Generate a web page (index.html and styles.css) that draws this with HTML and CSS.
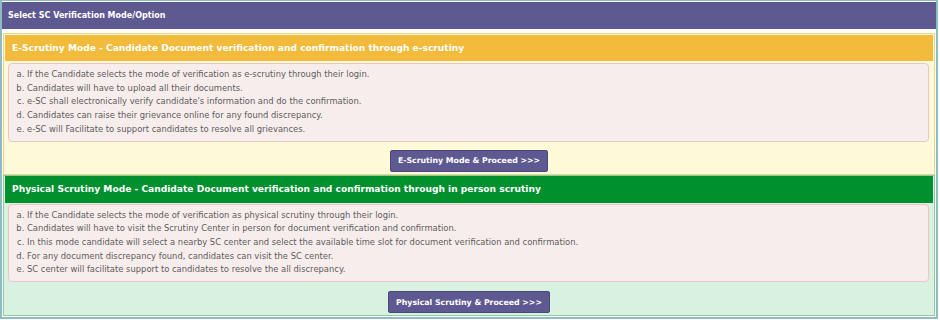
FILE: index.html
```html
<!DOCTYPE html>
<html lang="en">
<head>
  <meta charset="UTF-8">
  <title>Select SC Verification Mode</title>
  <link rel="stylesheet" href="styles.css">
</head>
<body>
  <div class="panel">
    <div class="panel-head">Select SC Verification Mode/Option</div>
    <div class="panel-body">

      <div class="mode mode-e">
        <div class="mode-head">E-Scrutiny Mode - Candidate Document verification and confirmation through e-scrutiny</div>
        <ol class="steps">
          <li>If the Candidate selects the mode of verification as e-scrutiny through their login.</li>
          <li>Candidates will have to upload all their documents.</li>
          <li>e-SC shall electronically verify candidate's information and do the confirmation.</li>
          <li>Candidates can raise their grievance online for any found discrepancy.</li>
          <li>e-SC will Facilitate to support candidates to resolve all grievances.</li>
        </ol>
        <div class="actions">
          <button class="btn">E-Scrutiny Mode &amp; Proceed &gt;&gt;&gt;</button>
        </div>
      </div>

      <div class="mode mode-p">
        <div class="mode-head">Physical Scrutiny Mode - Candidate Document verification and confirmation through in person scrutiny</div>
        <ol class="steps">
          <li>If the Candidate selects the mode of verification as physical scrutiny through their login.</li>
          <li>Candidates will have to visit the Scrutiny Center in person for document verification and confirmation.</li>
          <li>In this mode candidate will select a nearby SC center and select the available time slot for document verification and confirmation.</li>
          <li>For any document discrepancy found, candidates can visit the SC center.</li>
          <li>SC center will facilitate support to candidates to resolve the all discrepancy.</li>
        </ol>
        <div class="actions">
          <button class="btn">Physical Scrutiny &amp; Proceed &gt;&gt;&gt;</button>
        </div>
      </div>

    </div>
  </div>
</body>
</html>
```

FILE: styles.css
```css
body {
  margin: 0;
  background: #fff;
  font-family: "DejaVu Sans", sans-serif;
}

.panel {
  width: 934px;
  height: 316px;
  border: 2px solid #8fbcc2;
  border-top-width: 1px;
  background: #fff;
  box-sizing: content-box;
}

.panel-head {
  height: 27px;
  margin: 1px 0 0 0;
  background: #5f5991;
  color: #fff;
  font-weight: bold;
  font-size: 8px;
  line-height: 27px;
  padding-left: 6px;
}

.panel-body {
  padding: 4px 1px 0 1px;
}

.mode {
  border: 1px solid #e4d68c;
  padding: 1px;
}

.mode-e {
  background: #fef9d6;
}

.mode-p {
  background: #d8f2df;
  border-color: #8fcb9b;
  padding-top: 0;
}

.mode-head {
  height: 26px;
  line-height: 26px;
  padding-left: 7px;
  color: #fff;
  font-weight: bold;
  font-size: 9.1px;
}

.mode-e .mode-head {
  background: #f2bb3b;
}

.mode-p .mode-head {
  background: #00902e;
  height: 27px;
  line-height: 27px;
}

.steps {
  margin: 2px 4px 0 3px;
  padding: 4px 6px 4px 18px;
  list-style: lower-alpha;
  background: #f8eded;
  border: 1px solid #efc3c3;
  border-radius: 4px;
  color: #5c5c5c;
  font-size: 8.4px;
  line-height: 13.7px;
}

.mode-p .steps {
  margin-top: 1px;
}

.actions {
  display: flex;
  justify-content: center;
  padding: 8px 0 1px 0;
}

.mode-p .actions {
  padding-top: 9px;
}

.btn {
  height: 22px;
  padding: 0 7px;
  background: #5f5991;
  color: #fff;
  border: 1px solid #4d4780;
  border-radius: 2px;
  font-family: "DejaVu Sans", sans-serif;
  font-weight: bold;
  font-size: 7.8px;
  cursor: pointer;
}
```
